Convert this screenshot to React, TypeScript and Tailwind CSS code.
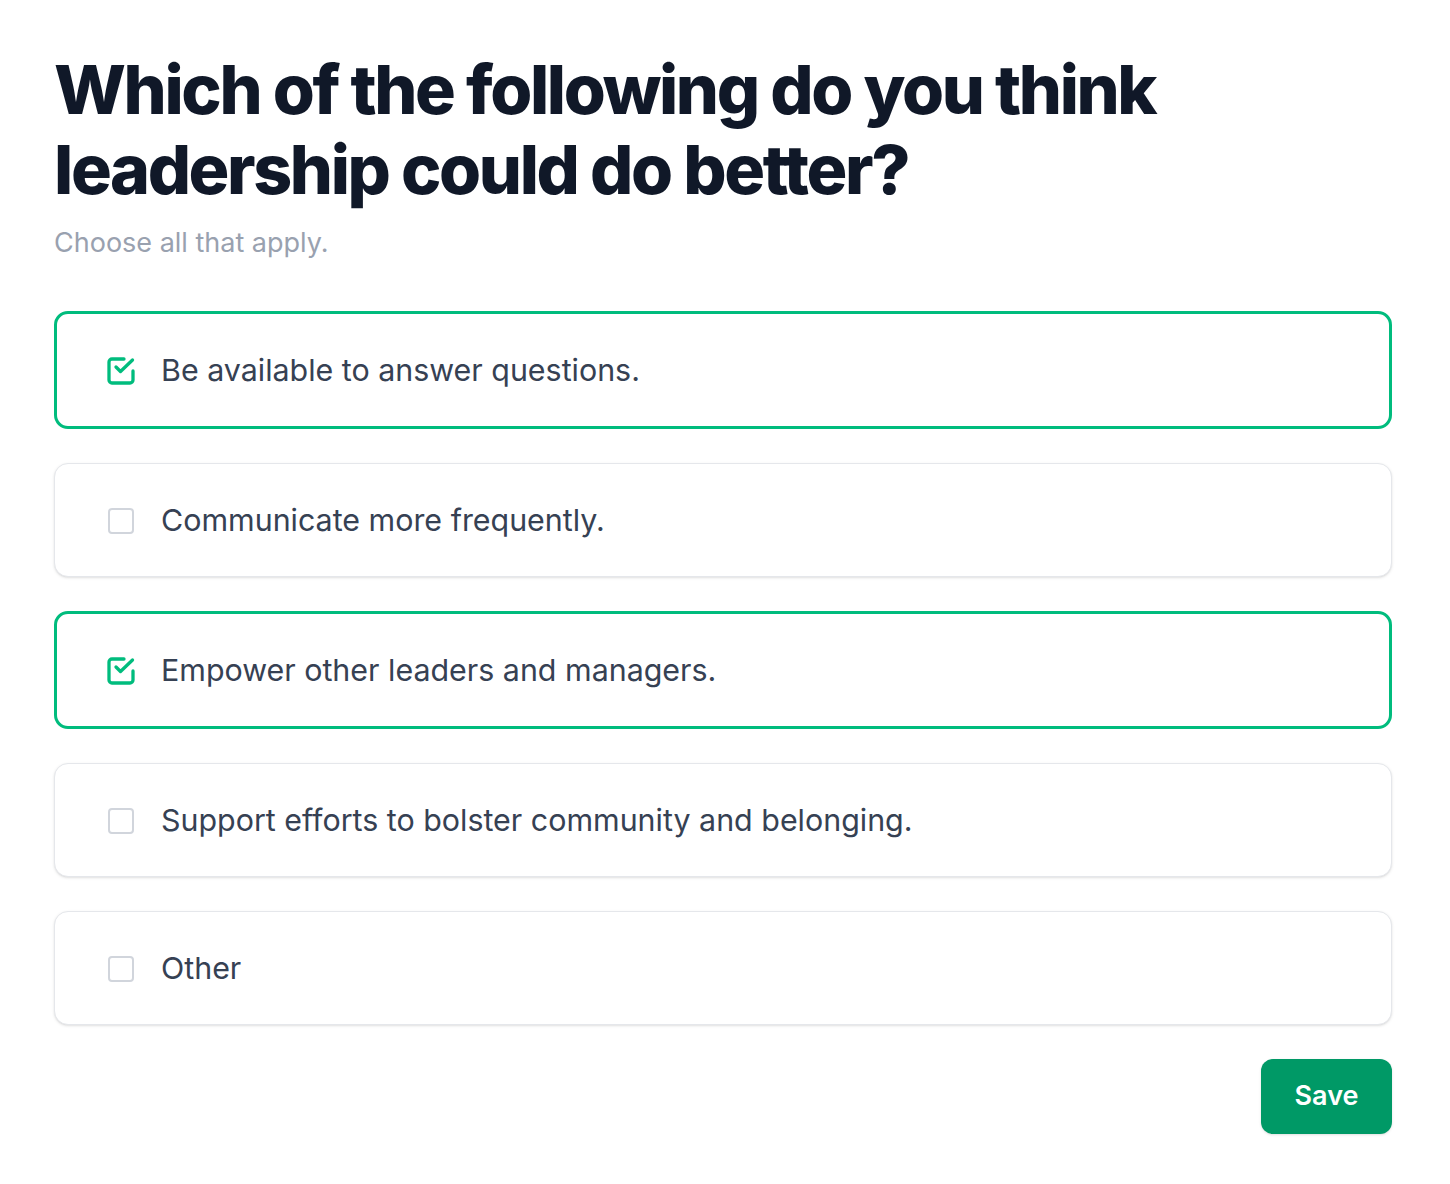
import { useState } from "react";

const OPTIONS = [
  "Be available to answer questions.",
  "Communicate more frequently.",
  "Empower other leaders and managers.",
  "Support efforts to bolster community and belonging.",
  "Other",
];

function CheckIcon() {
  return (
    <svg viewBox="0 0 28 28" className="h-[28px] w-[28px] overflow-visible text-emerald-500" fill="none" stroke="currentColor" strokeWidth="3.3" strokeLinecap="round" strokeLinejoin="round">
      <path d="M26 14V23a3 3 0 0 1-3 3H5a3 3 0 0 1-3-3V5a3 3 0 0 1 3-3h12" />
      <path d="M9 10l4.5 4.5L25.5 3" />
    </svg>
  );
}

export default function App() {
  const [selected, setSelected] = useState<number[]>([0, 2]);

  const toggle = (i: number) =>
    setSelected((s) => (s.includes(i) ? s.filter((x) => x !== i) : [...s, i]));

  return (
    <div className="min-h-screen bg-white pl-[54px] pr-[58px] pt-[49px] font-['Inter',sans-serif]">
      <h1 className="text-[68px] leading-[80px] font-extrabold tracking-[-0.035em] text-gray-900">
        Which of the following do you think
        <br />
        leadership could do better?
      </h1>
      <p className="mt-[14px] text-[27px] text-gray-400">Choose all that apply.</p>

      <div className="mt-[47px] flex flex-col gap-[34px]">
        {OPTIONS.map((opt, i) => {
          const on = selected.includes(i);
          return (
            <button
              key={i}
              onClick={() => toggle(i)}
              className={
                on
                  ? "flex h-[118px] items-center gap-[26px] rounded-[14px] border-[3px] border-emerald-500 bg-white pt-[3px] pl-[50px] text-left"
                  : "flex h-[114px] items-center gap-[26px] rounded-[14px] border border-gray-200 bg-white pt-[3px] pl-[52px] text-left shadow-sm"
              }
            >
              <span className="flex h-[28px] w-[28px] items-center justify-center">
                {on ? (
                  <CheckIcon />
                ) : (
                  <span className="block h-[26px] w-[26px] rounded-[4px] border-2 border-gray-300" />
                )}
              </span>
              <span className="text-[30.4px] text-gray-700">{opt}</span>
            </button>
          );
        })}
      </div>

      <div className="mt-[34px] flex justify-end">
        <button className="h-[75px] w-[131px] rounded-[12px] bg-emerald-600 text-[27px] font-semibold text-white shadow-sm">
          Save
        </button>
      </div>
    </div>
  );
}
